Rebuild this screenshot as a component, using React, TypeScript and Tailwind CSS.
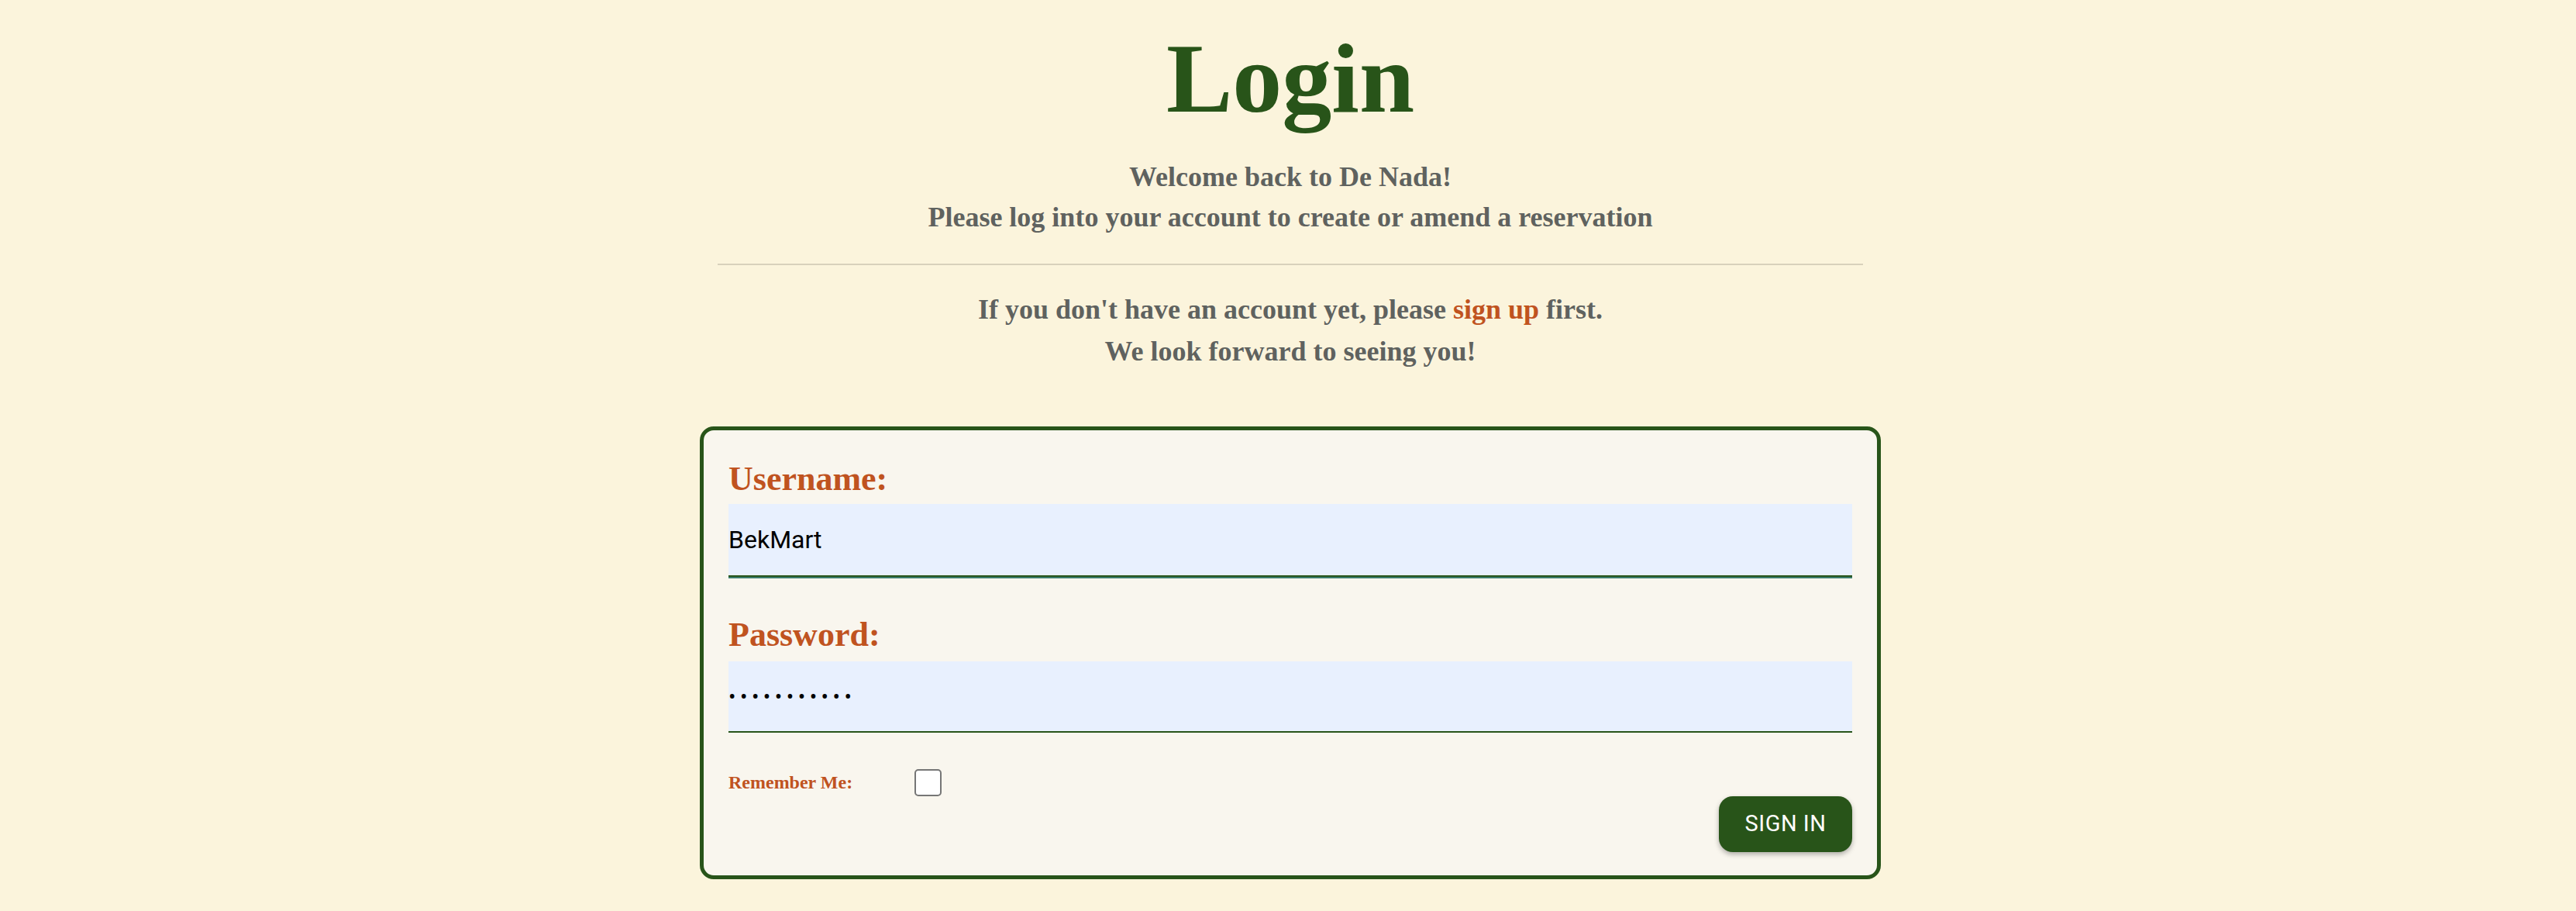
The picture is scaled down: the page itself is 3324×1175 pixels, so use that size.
import React from "react";

export default function App() {
  const serif = { fontFamily: '"Liberation Serif", "Times New Roman", serif' };
  return (
    <div className="h-screen w-full overflow-hidden bg-[#fbf4dc] flex flex-col items-center pl-[6px]" style={serif}>
      <h1 className="mt-[37px] text-[128px] leading-none font-bold text-[#285419]">Login</h1>
      <div className="mt-[37px] flex flex-col items-center text-[36px] leading-[52px] font-bold text-[#5f625f]">
        <p>Welcome back to De Nada!</p>
        <p>Please log into your account to create or amend a reservation</p>
      </div>
      <div className="mt-[34px] w-[1478px] h-[2px] bg-[#d8d1bc]" />
      <div className="mt-[30px] flex flex-col items-center text-[36px] leading-[54px] font-bold text-[#5f625f]">
        <p>
          If you don't have an account yet, please{" "}
          <a href="#" className="text-[#c0531f]">sign up</a> first.
        </p>
        <p>We look forward to seeing you!</p>
      </div>
      <form
        className="mt-[70px] w-[1524px] rounded-[18px] border-[5px] border-[#285419] bg-[#f9f6ee] px-[32px] pt-[37px] pb-[30px] flex flex-col"
        onSubmit={(e) => e.preventDefault()}
      >
        <label className="text-[44px] leading-[52px] font-bold text-[#c0531f]">Username:</label>
        <input
          readOnly
          value="BekMart"
          className="mt-[6px] h-[94px] w-full bg-[#e8f0fe] border-b-[2px] border-[#285419] shadow-[0_2px_0_#3b7d6c] text-[32px] text-black outline-none px-0"
          style={{ fontFamily: 'Roboto, "Liberation Sans", sans-serif' }}
        />
        <label className="mt-[49px] text-[44px] leading-[52px] font-bold text-[#c0531f]">Password:</label>
        <input
          readOnly
          type="password"
          value="abcdefghijk"
          className="mt-[8px] h-[92px] w-full bg-[#e8f0fe] border-b-[2px] border-[#285419] text-[28px] tracking-[5.5px] text-black outline-none px-0"
          style={{ fontFamily: 'Roboto, "Liberation Sans", sans-serif' }}
        />
        <div className="mt-[46px] h-[36px] flex items-center">
          <span className="w-[240px] text-[24px] font-bold text-[#c0531f]">Remember Me:</span>
          <span className="block w-[35px] h-[35px] rounded-[5px] border-[2px] border-[#767676] bg-white" />
        </div>
        <div className="flex justify-end">
          <button
            type="submit"
            className="w-[172px] h-[72px] rounded-[18px] bg-[#285419] text-white text-[29px] tracking-[0.5px] shadow-[0_3px_6px_rgba(0,0,0,0.3)]"
            style={{ fontFamily: 'Roboto, "Liberation Sans", sans-serif' }}
          >
            SIGN IN
          </button>
        </div>
      </form>
    </div>
  );
}
